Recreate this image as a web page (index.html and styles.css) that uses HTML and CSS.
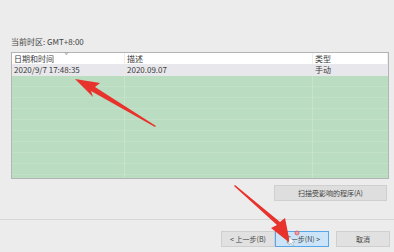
FILE: index.html
```html
<!DOCTYPE html>
<html lang="zh-CN">
<head>
    <meta charset="UTF-8">
    <title>系统还原</title>
    <link rel="stylesheet" href="styles.css">
</head>
<body>
    <div class="main">
        <div class="tz">当前时区: GMT+8:00</div>
        <div class="list">
            <div class="cols head">
                <div class="cell">日期和时间<span class="sort">&#711;</span></div>
                <div class="cell">描述</div>
                <div class="cell">类型</div>
            </div>
            <div class="cols row">
                <div class="cell">2020/9/7 17:48:35</div>
                <div class="cell">2020.09.07</div>
                <div class="cell">手动</div>
            </div>
            <div class="cols rest">
                <div class="cell"></div>
                <div class="cell"></div>
                <div class="cell"></div>
            </div>
        </div>
        <div class="scan-line">
            <button class="btn scan">扫描受影响的程序(A)</button>
        </div>
    </div>
    <div class="footer">
        <button class="btn">&lt; 上一步(B)</button>
        <button class="btn next">下一步(N) &gt;</button>
        <button class="btn cancel">取消</button>
    </div>

    <svg class="marks" width="394" height="252" viewBox="0 0 394 252">
        <!-- arrow to the restore point -->
        <polygon fill="#e8322c" points="155,127 91,91 93,97 75,79 100,83 95,87 156,126"/>
        <!-- arrow to next button -->
        <polygon fill="#e8322c" points="234,186 277,225 271,228 290,243 285,218 280,222 235,185"/>
        <circle cx="297" cy="233" r="2" fill="#f2a0a8" stroke="#d33" stroke-width="0.6"/>
        <polygon fill="#fff" stroke="#888" stroke-width="0.4" points="289,237 289,245 291,243 293,246 294,245 292,242 295,242"/>
    </svg>
</body>
</html>
```

FILE: styles.css
```css
* {
    box-sizing: border-box;
}

body {
    margin: 0;
    width: 394px;
    height: 252px;
    background: #ececec;
    font-family: "Noto Sans CJK SC", "Noto Sans", sans-serif;
    font-size: 8px;
    color: #3c3c3c;
    position: relative;
    overflow: hidden;
}

.main {
    padding: 36px 5px 0 11px;
}

.tz {
    height: 16px;
    line-height: 12px;
    color: #444;
}

.list {
    height: 127px;
    border: 1px solid #b4b4b4;
    display: flex;
    flex-direction: column;
    background: #badcc1;
}

.cols {
    display: grid;
    grid-template-columns: 113px 188px 1fr;
}

.cell {
    padding-left: 2px;
    white-space: nowrap;
    line-height: 11px;
}

.head {
    height: 11px;
    background: #fff;
}

.head .cell {
    position: relative;
    border-right: 1px solid #eee;
}

.sort {
    position: absolute;
    left: 52px;
    top: -3px;
    color: #999;
    font-size: 8px;
}

.row {
    height: 12px;
    background: #e8e7eb;
}

.row .cell {
    line-height: 12px;
}

.rest {
    flex: 1;
    background: repeating-linear-gradient(180deg, #badcc1 0, #badcc1 10px, #c2e1c8 10px, #c2e1c8 11px);
}

.rest .cell {
    border-right: 1px solid #c6e3cb;
}

.rest .cell:last-child {
    border-right: none;
}

.scan-line {
    display: flex;
    justify-content: flex-end;
    padding: 6px 2px 0 0;
}

.btn {
    font-family: inherit;
    font-size: 7px;
    color: #444;
    height: 16px;
    padding: 0;
    background: #e1e1e1;
    border: 1px solid #cfcfcf;
}

.scan {
    width: 113px;
    background: #dedede;
}

.footer {
    margin-top: 18px;
    border-top: 1px solid #d6d6d6;
    display: flex;
    justify-content: flex-end;
    padding: 11px 4px 0 0;
}

.footer .btn {
    width: 54px;
}

.next {
    background: #cce4f7;
    border-color: #5aa5e6;
}

.cancel {
    margin-left: 7px;
}

.marks {
    position: absolute;
    left: 0;
    top: 0;
}
```
